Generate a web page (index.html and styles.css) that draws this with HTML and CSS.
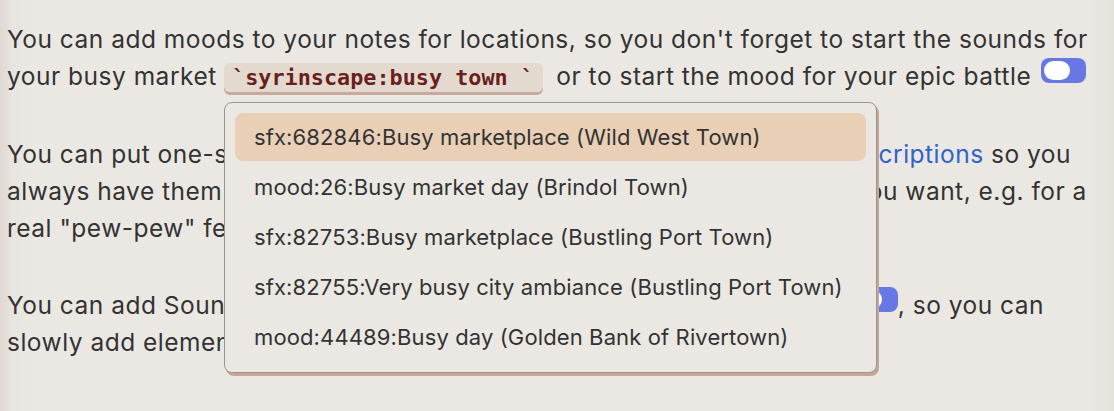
FILE: index.html
```html
<!DOCTYPE html>
<html>
<head>
<meta charset="utf-8">
<link rel="stylesheet" href="styles.css">
</head>
<body>
<main class="note">
  <p>You can add moods to your notes for locations, so you don't forget to start the sounds for<br>your busy market <code class="code">`syrinscape:busy town `</code> or to start the mood for your epic battle <span class="toggle"><span class="knob"></span></span></p>
  <p>You can put one-shot sound effects directly into the texts of all your <a class="link" href="#">descriptions</a> so you<br>always have them at hand and can quickly play those again whenever you want, e.g. for a<br>real "pew-pew" feeling.</p>
  <p>You can add Soundsets to your mood notes with a small, inline toggle <span class="toggle"><span class="knob"></span></span>, so you can<br>slowly add elements to a scene.</p>
</main>
<div class="popup">
  <div class="item active">sfx:682846:Busy marketplace (Wild West Town)</div>
  <div class="item">mood:26:Busy market day (Brindol Town)</div>
  <div class="item">sfx:82753:Busy marketplace (Bustling Port Town)</div>
  <div class="item">sfx:82755:Very busy city ambiance (Bustling Port Town)</div>
  <div class="item">mood:44489:Busy day (Golden Bank of Rivertown)</div>
</div>
</body>
</html>
```
FILE: styles.css
```css
html, body {
  margin: 0;
  padding: 0;
  height: 100%;
}
body {
  background: linear-gradient(to right, #e0d8d3 0px, #e8e4df 12px, #ebe8e3 30px, #ebe8e3 1090px, #e5e1db 1114px);
  font-family: Inter, "Noto Sans", sans-serif;
  color: #333333;
  overflow: hidden;
}
.note {
  padding: 21px 0 0 7px;
}
.note p {
  margin: 0 0 40px 0;
  font-size: 24.5px;
  letter-spacing: 0.5px;
  line-height: 37px;
  white-space: nowrap;
}
.code {
  font-family: "DejaVu Sans Mono", "Liberation Mono", monospace;
  font-size: 21.8px;
  letter-spacing: 0;
  font-weight: 600;
  color: #6a1f1f;
  background: #e4d9cf;
  border-radius: 6px;
  padding: 2px 9px 2px 8px;
  margin-right: 6px;
  box-shadow: 0 3px 0 #c7aa9b;
}
.toggle {
  display: inline-block;
  vertical-align: 2px;
  width: 45px;
  height: 25px;
  border-radius: 8px;
  background: #6778e4;
  position: relative;
  margin-left: 2px;
}
.knob {
  position: absolute;
  left: 3px;
  top: 3px;
  width: 26px;
  height: 19px;
  border-radius: 10px;
  background: #ffffff;
}
.link {
  color: #2f63c8;
  text-decoration: none;
}
.popup {
  position: absolute;
  left: 224px;
  top: 102px;
  width: 631px;
  height: 249px;
  padding: 10px;
  border: 1px solid #9c958f;
  border-radius: 8px;
  background: #ebe8e3;
  box-shadow: 2px 3px 0 #c4a696;
  display: flex;
  flex-direction: column;
  gap: 2px;
}
.item {
  height: 48px;
  line-height: 48px;
  padding-left: 19px;
  border-radius: 8px;
  font-size: 22px;
  letter-spacing: 0.12px;
  color: #333333;
  white-space: nowrap;
}
.item.active {
  background: #e8cfb5;
}
```
